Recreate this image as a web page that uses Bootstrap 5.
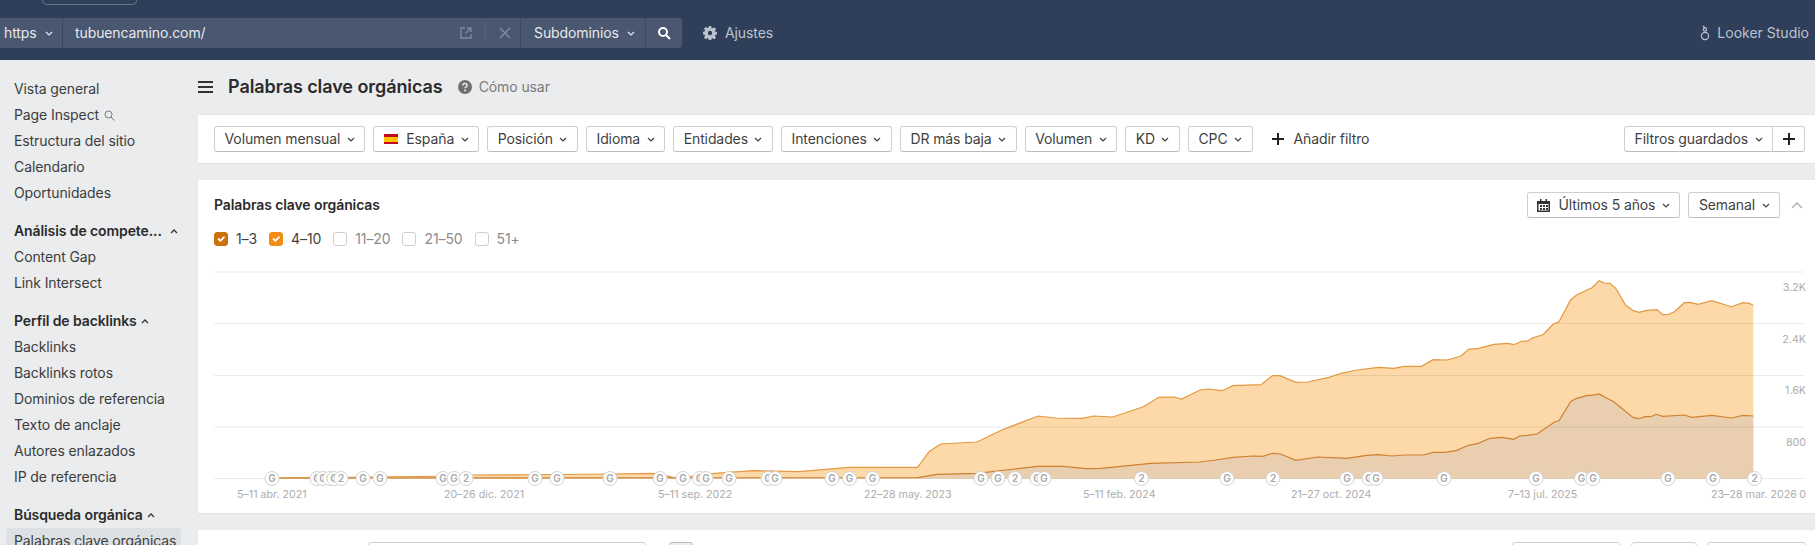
<!doctype html>
<html lang="es">
<head>
<meta charset="utf-8">
<title>Palabras clave orgánicas</title>
<link href="https://cdn.jsdelivr.net/npm/bootstrap@5.3.0/dist/css/bootstrap.min.css" rel="stylesheet">
<style>
html,body{height:545px;overflow:hidden}
body{font-family:Inter,"Liberation Sans",sans-serif;font-size:14px;letter-spacing:-.1px;color:#333;background:#eaecee;line-height:20px}
.topbar{height:60px;background:#2f3e59;color:#e6e9ee}
.top-pill{width:95px;height:5px;margin-left:42px;margin-bottom:13px;border:1px solid #68768f;border-top:0;border-radius:0 0 10px 10px}
.search-row{height:30px}
.seg{height:30px;background:#4a5770;border-right:1px solid #3b4862}
.seg-https{width:63px;padding-left:4px}
.seg-url{width:458px;padding-left:12px}
.seg-sub{width:125px;padding-left:13px}
.seg-go{width:36px;border-right:0;border-radius:0 3px 3px 0;justify-content:center}
.url-tools{color:#7f8a9d;gap:12px}
.url-sep{width:1px;height:20px;background:#566279}
.dim{color:#bcc3cf}
.settings-link{margin-left:21px}
.looker-link{gap:7px;letter-spacing:0;padding-right:6px}
.content-row{height:485px;overflow:hidden}
.side{width:198px;flex:none;padding-top:16px}
.side-item{height:26px;line-height:26px;padding-left:14px;white-space:nowrap;color:#3d3d3d}
.inspect-row{gap:5px}
.side-head{height:26px;line-height:26px;margin-top:12px;padding-left:14px;font-weight:600;color:#2b2b2b;white-space:nowrap}
.side-active{margin-left:6px;margin-right:17px;padding-left:8px;background:#dde0e4;border-radius:4px}
.page-main{flex:1 1 auto;min-width:0}
.title-row{height:54px}
.menu-icon{margin-right:15px}
.page-title{font-size:18px;font-weight:600;color:#2b2b2b;margin:0;line-height:24px;letter-spacing:-.07px}
.help-icon{margin:0 7px 0 15px}
.help-text{color:#7a7a7a}
.panel{background:#fff;border-bottom:1px solid #e2e4e6}
.filter-panel{height:50px;padding:11px 10px 0 16px;margin-bottom:16px;border-top:1px solid #e2e4e6;align-items:flex-start}
.fbtn{height:26px;padding:0 9.5px;border:1px solid #cfcfcf;border-bottom-color:#bdbdbd;border-radius:3px;font-size:14px;letter-spacing:-.1px;line-height:24px;color:#3f3f3f;background:#fff;display:inline-flex;align-items:center;gap:6.5px;white-space:nowrap}
.fbtn:hover{background:#fff;color:#3f3f3f;border-color:#cfcfcf}
.flag{width:14px;height:10px;margin-right:2px;background:linear-gradient(#c60b1e 25%,#ffc400 25%,#ffc400 75%,#c60b1e 75%)}
.add-filter{height:26px;margin-left:11px;gap:10px;color:#3f3f3f}
.chart-panel{height:334px;margin-bottom:16px;padding-top:12px}
.chart-top{height:26px;margin:0 12px 0 16px}
.chart-title{font-weight:600;color:#2b2b2b}
.cal-icon{margin-right:1.5px}
.collapse-icon{margin-left:11px}
.checks{height:20px;margin:11px 0 13px 16px;gap:12px}
.chk{gap:8px;font-size:14px;color:#8c8c8c}
.chk.on{color:#3f3f3f}
.chk .form-check-input{width:14px;height:14px;margin:0;border-radius:3px;border-color:#cfcfcf;flex:none;box-shadow:none}
.chk .tone-a{background-color:#c9720e;border-color:#c9720e}
.chk .tone-b{background-color:#f28c16;border-color:#f28c16}
.chart-svg{display:block}
.ax{font-family:Inter,"Liberation Sans",sans-serif;font-size:10.7px;letter-spacing:0;fill:#adadad}
.gm{font-family:Inter,"Liberation Sans",sans-serif;font-size:10px;font-weight:600;letter-spacing:0;fill:#a8a8a8;text-anchor:middle}
.last-panel{height:60px;padding-top:12px}
.stub{height:30px;border:1px solid #cfcfcf;border-radius:3px;background:#fff}
.stub-input{width:278px;margin-left:170px}
.stub-grey{width:24px;margin-left:23px;background:#eee;border-color:#bbb}
.stub-a{width:108px}
.stub-b{width:66px;margin-left:11px}
.stub-c{width:99px;margin-left:10px;margin-right:9px}
</style>
</head>
<body>
<svg width="0" height="0" class="position-absolute">
<defs>
<symbol id="chev" viewBox="0 0 8 5"><path d="M1 1l3 3 3-3" fill="none" stroke="currentColor" stroke-width="1.2"/></symbol>
</defs>
</svg>

<header class="topbar">
  <div class="top-pill"></div>
  <div class="search-row d-flex align-items-center">
    <div class="seg seg-https d-flex align-items-center gap-2">https <svg width="8" height="5"><use href="#chev"/></svg></div>
    <div class="seg seg-url d-flex align-items-center justify-content-between">
      <span>tubuencamino.com/</span>
      <span class="url-tools d-flex align-items-center pe-2">
        <svg width="14" height="14" viewBox="0 0 14 14" fill="none" stroke="currentColor" stroke-width="1.3"><path d="M6 2H2v10h10V8M8 2h4v4M12 2L6.5 7.5"/></svg>
        <span class="url-sep"></span>
        <svg width="14" height="14" viewBox="0 0 14 14" fill="none" stroke="currentColor" stroke-width="1.5"><path d="M2 2l10 10M12 2L2 12"/></svg>
      </span>
    </div>
    <div class="seg seg-sub d-flex align-items-center gap-2">Subdominios <svg width="8" height="5"><use href="#chev"/></svg></div>
    <div class="seg seg-go d-flex align-items-center">
      <svg width="14" height="14" viewBox="0 0 14 14" fill="none" stroke="#fff" stroke-width="2"><circle cx="6" cy="6" r="4"/><path d="M9 9l4 4"/></svg>
    </div>
    <div class="dim settings-link d-flex align-items-center gap-2">
      <svg width="14" height="14" viewBox="0 0 16 16" fill="#bcc3cf"><path fill-rule="evenodd" d="M6.600 0h2.800l.4 2.200 1.200.5 1.900-1.300 2 2-1.300 1.900.5 1.200 2.200.4v2.800l-2.200.4-.5 1.200 1.300 1.900-2 2-1.900-1.300-1.200.5-.4 2.200H6.600l-.4-2.200-1.200-.5-1.900 1.300-2-2 1.300-1.900-.5-1.200L-.3 9.400V6.600l2.200-.4.5-1.200L1.100 3.100l2-2L5 2.400l1.200-.5zM8 5.500a2.500 2.500 0 100 5 2.500 2.500 0 000-5z"/></svg>
      Ajustes
    </div>
    <div class="dim looker-link d-flex align-items-center ms-auto">
      <svg width="10" height="16" viewBox="0 0 10 16" fill="none" stroke="#bcc3cf" stroke-width="1.2"><circle cx="5" cy="11" r="3.600"/><circle cx="5" cy="4.500" r="1.600"/><path d="M3 1l2 2"/></svg>
      Looker Studio
    </div>
  </div>
</header>

<div class="content-row d-flex">
  <nav class="side">
    <div class="side-item">Vista general</div>
    <div class="side-item inspect-row d-flex align-items-center">Page Inspect
      <svg width="11" height="11" viewBox="0 0 11 11" fill="none" stroke="#777"><circle cx="4.500" cy="4.500" r="3.500"/><path d="M7 7l3.500 3.500"/></svg></div>
    <div class="side-item">Estructura del sitio</div>
    <div class="side-item">Calendario</div>
    <div class="side-item">Oportunidades</div>
    <div class="side-head d-flex align-items-center gap-2">Análisis de compete...
      <svg width="8" height="5" viewBox="0 0 8 5" fill="none" stroke="#333" stroke-width="1.3"><path d="M1 4l3-3 3 3"/></svg></div>
    <div class="side-item">Content Gap</div>
    <div class="side-item">Link Intersect</div>
    <div class="side-head d-flex align-items-center gap-1">Perfil de backlinks
      <svg width="8" height="5" viewBox="0 0 8 5" fill="none" stroke="#333" stroke-width="1.3"><path d="M1 4l3-3 3 3"/></svg></div>
    <div class="side-item">Backlinks</div>
    <div class="side-item">Backlinks rotos</div>
    <div class="side-item">Dominios de referencia</div>
    <div class="side-item">Texto de anclaje</div>
    <div class="side-item">Autores enlazados</div>
    <div class="side-item">IP de referencia</div>
    <div class="side-head d-flex align-items-center gap-1">Búsqueda orgánica
      <svg width="8" height="5" viewBox="0 0 8 5" fill="none" stroke="#333" stroke-width="1.3"><path d="M1 4l3-3 3 3"/></svg></div>
    <div class="side-item side-active">Palabras clave orgánicas</div>
  </nav>

  <main class="page-main">
    <div class="title-row d-flex align-items-center">
      <svg width="15" height="12" viewBox="0 0 15 12" fill="#333" class="menu-icon"><rect width="15" height="2"/><rect y="5" width="15" height="2"/><rect y="10" width="15" height="2"/></svg>
      <h1 class="page-title">Palabras clave orgánicas</h1>
      <svg width="14" height="14" viewBox="0 0 14 14" class="help-icon"><circle cx="7" cy="7" r="7" fill="#6f6f6f"/><path d="M4.900 5.400c0-1.200 1-1.900 2.100-1.900s2.100.7 2.100 1.800c0 1.600-2 1.500-2 3" fill="none" stroke="#eaecee" stroke-width="1.500"/><circle cx="7" cy="10.500" r="1" fill="#eaecee"/></svg>
      <span class="help-text">Cómo usar</span>
    </div>

    <section class="panel filter-panel d-flex gap-2">
      <button class="btn fbtn">Volumen mensual <svg width="8" height="5"><use href="#chev"/></svg></button>
      <button class="btn fbtn"><span class="flag"></span>España <svg width="8" height="5"><use href="#chev"/></svg></button>
      <button class="btn fbtn">Posición <svg width="8" height="5"><use href="#chev"/></svg></button>
      <button class="btn fbtn">Idioma <svg width="8" height="5"><use href="#chev"/></svg></button>
      <button class="btn fbtn">Entidades <svg width="8" height="5"><use href="#chev"/></svg></button>
      <button class="btn fbtn">Intenciones <svg width="8" height="5"><use href="#chev"/></svg></button>
      <button class="btn fbtn">DR más baja <svg width="8" height="5"><use href="#chev"/></svg></button>
      <button class="btn fbtn">Volumen <svg width="8" height="5"><use href="#chev"/></svg></button>
      <button class="btn fbtn">KD <svg width="8" height="5"><use href="#chev"/></svg></button>
      <button class="btn fbtn">CPC <svg width="8" height="5"><use href="#chev"/></svg></button>
      <div class="add-filter d-flex align-items-center">
        <svg width="12" height="12" viewBox="0 0 12 12" fill="#222"><rect x="5" width="2" height="12"/><rect y="5" width="12" height="2"/></svg>
        Añadir filtro
      </div>
      <div class="btn-group ms-auto">
        <button class="btn fbtn">Filtros guardados <svg width="8" height="5"><use href="#chev"/></svg></button>
        <button class="btn fbtn">
          <svg width="12" height="12" viewBox="0 0 12 12" fill="#222"><rect x="5" width="2" height="12"/><rect y="5" width="12" height="2"/></svg>
        </button>
      </div>
    </section>

    <section class="panel chart-panel">
      <div class="chart-top d-flex align-items-center">
        <span class="chart-title">Palabras clave orgánicas</span>
        <button class="btn fbtn ms-auto me-2">
          <svg width="13" height="13" viewBox="0 0 13 13" fill="#333" class="cal-icon"><path fill-rule="evenodd" d="M0 2h3V0h1.500v2h4V0H10v2h3v11H0zM1.500 5v6.500h10V5zM3 6h2v2H3zm3 0h2v2H6zm3 0h2v2H9zM3 9h2v2H3zm3 0h2v2H6zm3 0h2v2H9z"/></svg>
          Últimos 5 años <svg width="8" height="5"><use href="#chev"/></svg></button>
        <button class="btn fbtn">Semanal <svg width="8" height="5"><use href="#chev"/></svg></button>
        <svg width="12" height="7" viewBox="0 0 12 7" fill="none" stroke="#b5b5b5" stroke-width="1.600" class="collapse-icon"><path d="M1 6l5-5 5 5"/></svg>
      </div>
      <div class="checks d-flex align-items-center">
        <label class="chk on d-flex align-items-center"><input class="form-check-input tone-a" type="checkbox" checked>1–3</label>
        <label class="chk on d-flex align-items-center"><input class="form-check-input tone-b" type="checkbox" checked>4–10</label>
        <label class="chk d-flex align-items-center"><input class="form-check-input" type="checkbox">11–20</label>
        <label class="chk d-flex align-items-center"><input class="form-check-input" type="checkbox">21–50</label>
        <label class="chk d-flex align-items-center"><input class="form-check-input" type="checkbox">51+</label>
      </div>
      <svg class="chart-svg" width="1617" height="251" viewBox="198 262 1617 251">
        <defs>
          <g id="mg"><circle r="7" fill="#fff" stroke="#d2d2d2"/><text class="gm" y="3.500">G</text></g>
          <g id="m2"><circle r="7" fill="#fff" stroke="#d2d2d2"/><text class="gm" y="3.500">2</text></g>
        </defs>
        <path fill="#fdd9a9" d="M272 478L466 476 473 475 560 474.500 609 474 653 473.300 660 474 676.500 478.300 714.800 473.300 753 470.700 799 471.700 825.800 469.300 848.800 467.300 917.600 467.300 929 451.700 940.600 444 977 442 1001.800 430 1038 416 1055.400 418 1082 418.300 1093.700 416 1112.800 417 1143.400 406.700 1158.700 397.300 1174 397 1181.700 399 1200 390 1208 389 1222 390.700 1233 385.700 1261 384.700 1272.500 375.700 1280 375.700 1296 382.300 1308 382 1329 377.300 1341 373.300 1357 370 1378.500 367.300 1394 368.300 1404 366.300 1421.500 366.300 1433 359.700 1447 360 1461 356 1468.600 349.300 1478.400 348.300 1494 344.300 1508 343.300 1513.700 344.700 1521.600 341.300 1527.500 341 1533 337.700 1543 334.700 1553 324.300 1559 321.700 1570.600 300 1576.500 295 1592 287.700 1599 280.700 1604 283 1610 283.300 1615.700 288.300 1625.500 305 1633.300 310.700 1639 312.300 1647 310.300 1657 309.700 1662.700 314.700 1668.600 314.300 1674.500 311.700 1684.300 302.700 1690 302.300 1698 304.300 1711.800 300.700 1731.400 306.700 1743 302.700 1749 303.300 1753.300 305.300V478.500H272Z"/>
        <path fill="#e9cfaf" d="M272 478L917.600 477.700 936.800 474.300 977 473.300 1005.700 470 1038 466.300 1063 466.300 1086 468.700 1101.300 468.300 1151 463.300 1200 462 1215.700 460 1233.300 457.300 1253 456 1262.700 456.300 1272.500 453.300 1280.400 454 1296 460.300 1317.600 457 1347 458.300 1366.700 455.300 1378.400 454.700 1392 456 1404 455 1423.500 455 1433.300 452.300 1445 452.300 1456.900 450.300 1468.600 445.300 1478.400 443.300 1490 438.300 1502 437.300 1513.700 439.300 1519.600 436 1527.500 435.300 1537 434 1555 421.700 1558.800 421 1570.600 401.700 1576.500 398.300 1588 395.300 1592 395.300 1599 394 1606 397.700 1613.700 401.700 1633.300 417.700 1639 418.700 1645 416.700 1651 416.700 1656 414.300 1662.700 416.300 1684.300 415 1692 417.300 1711.800 415.300 1731.400 418 1743 415.300 1753.300 416V478.500H272Z"/>
        <path stroke="#000" stroke-opacity=".08" d="M214 272H1804M214 323.500H1804M214 375.500H1804M214 427H1804M214 478.500H1804"/>
        <path fill="none" stroke="#e4983f" stroke-width="1.200" d="M272 478L466 476 473 475 560 474.500 609 474 653 473.300 660 474 676.500 478.300 714.800 473.300 753 470.700 799 471.700 825.800 469.300 848.800 467.300 917.600 467.300 929 451.700 940.600 444 977 442 1001.800 430 1038 416 1055.400 418 1082 418.300 1093.700 416 1112.800 417 1143.400 406.700 1158.700 397.300 1174 397 1181.700 399 1200 390 1208 389 1222 390.700 1233 385.700 1261 384.700 1272.500 375.700 1280 375.700 1296 382.300 1308 382 1329 377.300 1341 373.300 1357 370 1378.500 367.300 1394 368.300 1404 366.300 1421.500 366.300 1433 359.700 1447 360 1461 356 1468.600 349.300 1478.400 348.300 1494 344.300 1508 343.300 1513.700 344.700 1521.600 341.300 1527.500 341 1533 337.700 1543 334.700 1553 324.300 1559 321.700 1570.600 300 1576.500 295 1592 287.700 1599 280.700 1604 283 1610 283.300 1615.700 288.300 1625.500 305 1633.300 310.700 1639 312.300 1647 310.300 1657 309.700 1662.700 314.700 1668.600 314.300 1674.500 311.700 1684.300 302.700 1690 302.300 1698 304.300 1711.800 300.700 1731.400 306.700 1743 302.700 1749 303.300 1753.300 305.300"/>
        <path fill="none" stroke="#cf8130" stroke-width="1.200" d="M272 478L917.600 477.700 936.800 474.300 977 473.300 1005.700 470 1038 466.300 1063 466.300 1086 468.700 1101.300 468.300 1151 463.300 1200 462 1215.700 460 1233.300 457.300 1253 456 1262.700 456.300 1272.500 453.300 1280.400 454 1296 460.300 1317.600 457 1347 458.300 1366.700 455.300 1378.400 454.700 1392 456 1404 455 1423.500 455 1433.300 452.300 1445 452.300 1456.900 450.300 1468.600 445.300 1478.400 443.300 1490 438.300 1502 437.300 1513.700 439.300 1519.600 436 1527.500 435.300 1537 434 1555 421.700 1558.800 421 1570.600 401.700 1576.500 398.300 1588 395.300 1592 395.300 1599 394 1606 397.700 1613.700 401.700 1633.300 417.700 1639 418.700 1645 416.700 1651 416.700 1656 414.300 1662.700 416.300 1684.300 415 1692 417.300 1711.800 415.300 1731.400 418 1743 415.300 1753.300 416"/>
        <g>
          <use href="#mg" x="272" y="478.500"/><use href="#mg" x="317" y="478.500"/><use href="#mg" x="323" y="478.500"/><use href="#mg" x="330" y="478.500"/><use href="#mg" x="334" y="478.500"/><use href="#m2" x="341" y="478.500"/><use href="#mg" x="363" y="478.500"/><use href="#mg" x="380" y="478.500"/><use href="#mg" x="443" y="478.500"/><use href="#mg" x="454" y="478.500"/><use href="#m2" x="466" y="478.500"/><use href="#mg" x="535" y="478.500"/><use href="#mg" x="557" y="478.500"/><use href="#mg" x="610" y="478.500"/><use href="#mg" x="660" y="478.500"/><use href="#mg" x="683" y="478.500"/><use href="#mg" x="699.500" y="478.500"/><use href="#mg" x="706" y="478.500"/><use href="#mg" x="729" y="478.500"/><use href="#mg" x="768" y="478.500"/><use href="#mg" x="775" y="478.500"/><use href="#mg" x="832" y="478.500"/><use href="#mg" x="849.500" y="478.500"/><use href="#mg" x="872.500" y="478.500"/><use href="#mg" x="981" y="478.500"/><use href="#mg" x="998" y="478.500"/><use href="#m2" x="1015" y="478.500"/><use href="#mg" x="1037" y="478.500"/><use href="#mg" x="1044" y="478.500"/><use href="#m2" x="1141.500" y="478.500"/><use href="#mg" x="1227" y="478.500"/><use href="#m2" x="1273" y="478.500"/><use href="#mg" x="1347" y="478.500"/><use href="#mg" x="1369" y="478.500"/><use href="#mg" x="1376" y="478.500"/><use href="#mg" x="1444" y="478.500"/><use href="#mg" x="1536" y="478.500"/><use href="#mg" x="1581.500" y="478.500"/><use href="#mg" x="1593" y="478.500"/><use href="#mg" x="1668" y="478.500"/><use href="#mg" x="1713" y="478.500"/><use href="#m2" x="1754.500" y="478.500"/>
        </g>
        <text class="ax" x="237" y="498">5–11 abr. 2021</text>
        <text class="ax" x="444" y="498">20–26 dic. 2021</text>
        <text class="ax" x="658" y="498">5–11 sep. 2022</text>
        <text class="ax" x="864" y="498">22–28 may. 2023</text>
        <text class="ax" x="1083" y="498">5–11 feb. 2024</text>
        <text class="ax" x="1291" y="498">21–27 oct. 2024</text>
        <text class="ax" x="1508" y="498">7–13 jul. 2025</text>
        <text class="ax" x="1711" y="498">23–28 mar. 2026</text>
        <text class="ax" x="1806" y="498" text-anchor="end">0</text>
        <text class="ax" x="1806" y="291" text-anchor="end">3.2K</text>
        <text class="ax" x="1806" y="343" text-anchor="end">2.4K</text>
        <text class="ax" x="1806" y="394" text-anchor="end">1.6K</text>
        <text class="ax" x="1806" y="446" text-anchor="end">800</text>
      </svg>
    </section>

    <section class="panel last-panel d-flex">
      <div class="stub stub-input"></div>
      <div class="stub stub-grey"></div>
      <div class="stub stub-a ms-auto"></div>
      <div class="stub stub-b"></div>
      <div class="stub stub-c"></div>
    </section>
  </main>
</div>
<script src="https://cdn.jsdelivr.net/npm/bootstrap@5.3.0/dist/js/bootstrap.bundle.min.js"></script>
</body>
</html>
